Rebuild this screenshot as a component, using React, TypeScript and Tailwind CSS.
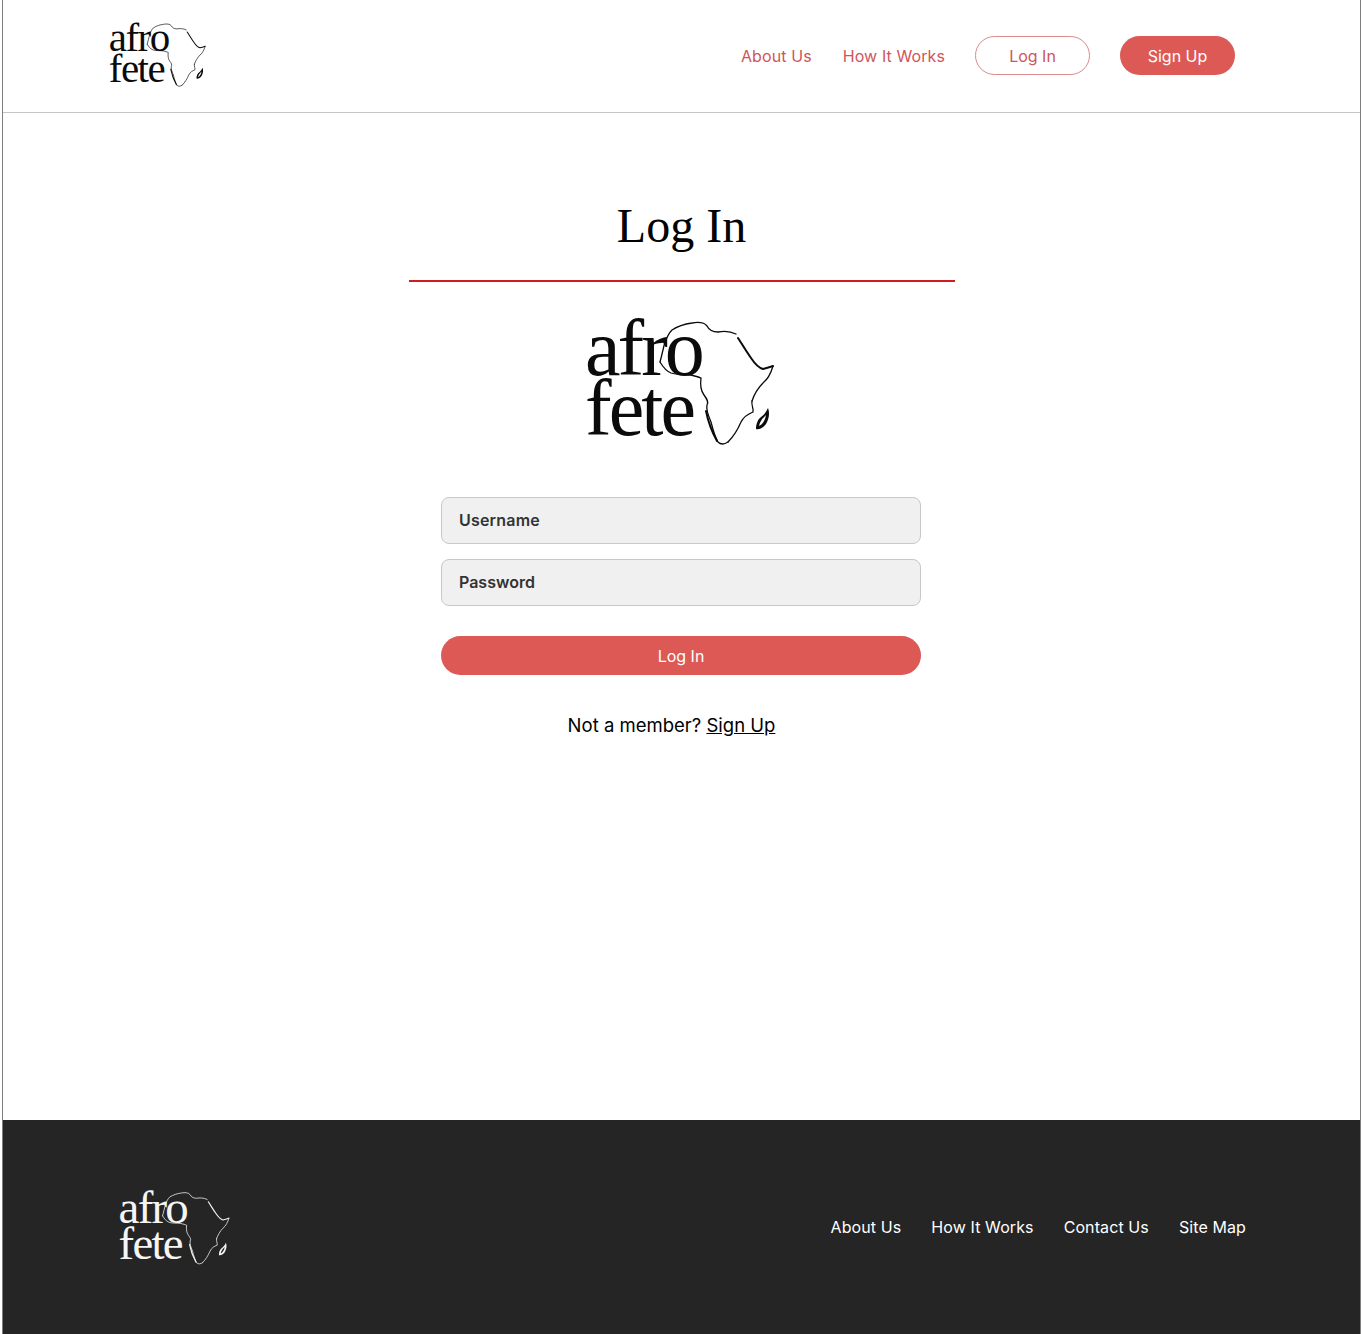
const sans = 'font-["Inter",sans-serif]';

const Logo = ({ className = '', color = '#0b0b0b' }: { className?: string; color?: string }) => (
  <svg viewBox="0 0 220 160" className={className} aria-label="afro fete">
    <g fill={color} fontFamily="'Liberation Serif', serif" fontSize="80" letterSpacing="-3">
      <text x="13" y="74">afro</text>
      <text x="13" y="134">fete</text>
    </g>
    <g transform="translate(-2 -2)">
      <g fill="none" stroke={color} strokeWidth="1.3" strokeLinecap="round" strokeLinejoin="round">
        <path d="M90 63C92 56 93 50 95 43C97 38 99 34 102 31C108 27 115 25 122 24C128 23 134 23 137 27C139 31 143 33 148 33C153 32 160 32 166 35" />
        <path d="M90 63C93 68 96 72 101 74C107 76 114 75 121 76C125 77 129 78 131 79C130 86 131 92 134 96C137 100 139 103 137 106C136 110 138 116 141 123C143 131 145 138 148 143C151 146 155 145 158 143" />
        <path strokeWidth="2" d="M168 39C172 45 176 52 181 59C185 65 189 69 193 70C197 69 200 68 203 67" />
        <path d="M203 67C201 74 198 80 193 84C188 89 184 96 182 102" />
        <path d="M182 102C181 106 184 110 183 113C178 115 174 117 171 123C168 130 164 137 158 143" />
        <path strokeWidth="2" d="M136 112C138 122 142 133 147 142" />
      </g>
      <path
        fill={color}
        fillRule="evenodd"
        d="M186 130C186 125 188 120 191 118C194 116 196 113 198 109C200 114 199 120 196 125C193 129 189 131 186 130ZM189 127C192 126 195 122 196 116C193 119 190 122 189 127Z"
      />
    </g>
  </svg>
);

export default function App() {
  return (
    <div className={`flex h-[1334px] w-[1362px] flex-col bg-white ${sans}`}>
      <div className="ml-[2px] mr-[1px] flex flex-1 flex-col border-x border-[#7f7f7f]">
        <header className="flex h-[113px] shrink-0 items-center justify-between border-b border-[#c4c4c4] pl-[99px] pr-[125px]">
          <Logo className="mb-[4px] h-[82px] w-[113px]" />
          <nav className="mb-[1px] flex items-center text-[16px] text-[#d0555a]">
            <a className="mr-[31px] tracking-[0.1px]">About Us</a>
            <a className="mr-[30px] tracking-[0.1px]">How It Works</a>
            <a className="mr-[30px] flex h-[39px] w-[115px] items-center justify-center rounded-full border border-[#dc8a8a]">Log In</a>
            <a className="flex h-[39px] w-[115px] items-center justify-center rounded-full bg-[#dc5955] text-white">Sign Up</a>
          </nav>
        </header>

        <main className="flex flex-1 flex-col items-center">
          <h1 className="mt-[83px] font-['Liberation_Serif',serif] text-[48px] leading-[60px] text-black">Log In</h1>
          <div className="mt-[24px] h-[2px] w-[546px] bg-[#d01c1f]" />
          <Logo className="mt-[19px] h-[160px] w-[220px]" />
          <form className="mr-[1px] mt-[36px] flex w-[480px] flex-col">
            <div className="flex h-[47px] items-center rounded-[8px] border border-[#c8c8c8] bg-[#f0f0f0] px-[17px] pb-[2px] text-[16px] font-semibold tracking-[0.2px] text-[#333333]">Username</div>
            <div className="mt-[15px] flex h-[47px] items-center rounded-[8px] border border-[#c8c8c8] bg-[#f0f0f0] px-[17px] pb-[2px] text-[16px] font-semibold text-[#333333]">Password</div>
            <button type="button" className="mt-[30px] h-[39px] rounded-full bg-[#dc5955] text-[16px] text-white">Log In</button>
          </form>
          <p className="mt-[38px] pr-[20px] text-[18.5px] leading-[24px] text-black">
            Not a member? <a className="underline">Sign Up</a>
          </p>
        </main>

        <footer className="flex h-[214px] shrink-0 items-center justify-between bg-[#252525] pl-[108px] pr-[114px]">
          <Logo className="h-[94px] w-[129px]" color="#f5f5f5" />
          <nav className="flex items-center gap-[30px] text-[16px] tracking-[0.1px] text-white">
            <a>About Us</a>
            <a>How It Works</a>
            <a>Contact Us</a>
            <a>Site Map</a>
          </nav>
        </footer>
      </div>
    </div>
  );
}
